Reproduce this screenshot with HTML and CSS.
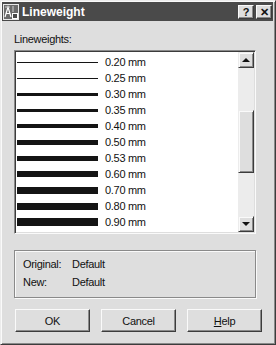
FILE: index.html
```html
<html>
<head>
    <title>Lineweight</title>
    <link rel="stylesheet" href="styles.css">
</head>
<body>
    <div class="window">
        <!-- Title bar -->
        <div class="titlebar">
            <svg class="appicon" width="16" height="16" viewBox="0 0 16 16">
                <rect x="0" y="0" width="16" height="16" fill="#6a6a6a"/>
                <rect x="0.5" y="0.5" width="15" height="15" fill="none" stroke="#e8e8e8"/>
                <path d="M2 13 L5 3 L8 13 M3.2 9.5 H6.8" stroke="#fff" stroke-width="1.2" fill="none"/>
                <path d="M2 3 H7 M10 2 V8" stroke="#cfcfcf" stroke-width="1" fill="none"/>
                <rect x="9.5" y="9.5" width="5" height="5" fill="#4a4a4a" stroke="#fff"/>
            </svg>
            <span class="title">Lineweight</span>
            <div class="tbuttons">
                <div class="tbtn">?</div>
                <div class="tbtn">&#x2715;</div>
            </div>
        </div>

        <div class="content">
            <div class="label">Lineweights:</div>

            <!-- Lineweight list -->
            <div class="listbox">
                <div class="rows">
                    <div class="row"><div class="line" style="height:1px"></div><span class="val">0.20 mm</span></div>
                    <div class="row"><div class="line" style="height:1px"></div><span class="val">0.25 mm</span></div>
                    <div class="row"><div class="line" style="height:3px"></div><span class="val">0.30 mm</span></div>
                    <div class="row"><div class="line" style="height:3px"></div><span class="val">0.35 mm</span></div>
                    <div class="row"><div class="line" style="height:4px"></div><span class="val">0.40 mm</span></div>
                    <div class="row"><div class="line" style="height:5px"></div><span class="val">0.50 mm</span></div>
                    <div class="row"><div class="line" style="height:5px"></div><span class="val">0.53 mm</span></div>
                    <div class="row"><div class="line" style="height:6px"></div><span class="val">0.60 mm</span></div>
                    <div class="row"><div class="line" style="height:7px"></div><span class="val">0.70 mm</span></div>
                    <div class="row"><div class="line" style="height:7px"></div><span class="val">0.80 mm</span></div>
                    <div class="row"><div class="line" style="height:8px"></div><span class="val">0.90 mm</span></div>
                </div>
                <div class="scrollbar">
                    <div class="sbtn"><div class="arrow-up"></div></div>
                    <div class="track">
                        <div class="thumb"></div>
                    </div>
                    <div class="sbtn"><div class="arrow-down"></div></div>
                </div>
            </div>

            <!-- Original / New -->
            <div class="info">
                <div class="inforow"><span class="key">Original:</span><span>Default</span></div>
                <div class="inforow"><span class="key">New:</span><span>Default</span></div>
            </div>

            <div class="buttons">
                <button class="btn">OK</button>
                <button class="btn">Cancel</button>
                <button class="btn"><u>H</u>elp</button>
            </div>
        </div>
    </div>
</body>
</html>
```

FILE: styles.css
```css
body {
    margin: 0;
    background-color: #dedede;
    font-family: "Liberation Sans", Arial, sans-serif;
    font-size: 11px;
    color: #111;
}

.window {
    width: 276px;
    height: 345px;
    box-sizing: border-box;
    background-color: #dedede;
    border-top: 1px solid #ececec;
    border-left: 1px solid #ececec;
    border-right: 1px solid #3c3c3c;
    border-bottom: 1px solid #3c3c3c;
    box-shadow: inset 1px 1px 0 #fafafa, inset -1px -1px 0 #8a8a8a;
    padding: 1px 2px 2px 1px;
    display: flex;
    flex-direction: column;
}

.titlebar {
    height: 19px;
    background-color: #4a4a4a;
    display: flex;
    align-items: center;
    padding-left: 1px;
}

.appicon {
    display: block;
    flex-shrink: 0;
}

.title {
    color: white;
    font-weight: bold;
    font-size: 12px;
    margin-left: 3px;
    flex: 1;
}

.tbuttons {
    display: flex;
    gap: 2px;
    margin-right: 1px;
}

.tbtn {
    width: 16px;
    height: 14px;
    box-sizing: border-box;
    background-color: #dedede;
    border-top: 1px solid #fafafa;
    border-left: 1px solid #fafafa;
    border-right: 1px solid #3c3c3c;
    border-bottom: 1px solid #3c3c3c;
    box-shadow: inset -1px -1px 0 #8a8a8a;
    color: #111;
    font-weight: bold;
    font-size: 11px;
    line-height: 12px;
    text-align: center;
}

.content {
    padding: 0 0 0 12px;
    display: flex;
    flex-direction: column;
}

.label {
    margin-top: 12px;
    line-height: 13px;
    letter-spacing: -0.3px;
}

.listbox {
    margin-top: 4px;
    width: 242px;
    height: 184px;
    box-sizing: border-box;
    border-top: 1px solid #8a8a8a;
    border-left: 1px solid #8a8a8a;
    border-right: 1px solid #fafafa;
    border-bottom: 1px solid #fafafa;
    box-shadow: inset 1px 1px 0 #3c3c3c, inset -1px -1px 0 #dedede;
    padding: 1px;
    background-color: white;
    display: flex;
}

.rows {
    flex: 1;
    padding-top: 2px;
}

.row {
    height: 16px;
    display: flex;
    align-items: center;
}

.line {
    width: 81px;
    margin-left: 1px;
    background-color: #141414;
}

.val {
    margin-left: 7px;
    letter-spacing: -0.3px;
}

.scrollbar {
    width: 16px;
    display: flex;
    flex-direction: column;
    background-color: #ececec;
}

.sbtn {
    height: 16px;
    box-sizing: border-box;
    background-color: #dedede;
    border-top: 1px solid #ececec;
    border-left: 1px solid #ececec;
    border-right: 1px solid #3c3c3c;
    border-bottom: 1px solid #3c3c3c;
    box-shadow: inset 1px 1px 0 #fafafa, inset -1px -1px 0 #8a8a8a;
    display: flex;
    align-items: center;
    justify-content: center;
}

.arrow-up {
    width: 0;
    height: 0;
    border-left: 4px solid transparent;
    border-right: 4px solid transparent;
    border-bottom: 4px solid #111;
}

.arrow-down {
    width: 0;
    height: 0;
    border-left: 4px solid transparent;
    border-right: 4px solid transparent;
    border-top: 4px solid #111;
}

.track {
    flex: 1;
    padding-top: 42px;
}

.thumb {
    height: 63px;
    box-sizing: border-box;
    background-color: #dedede;
    border-top: 1px solid #ececec;
    border-left: 1px solid #ececec;
    border-right: 1px solid #3c3c3c;
    border-bottom: 1px solid #3c3c3c;
    box-shadow: inset 1px 1px 0 #fafafa, inset -1px -1px 0 #8a8a8a;
}

.info {
    margin-top: 16px;
    width: 242px;
    height: 48px;
    box-sizing: border-box;
    border: 1px solid #8a8a8a;
    box-shadow: inset 1px 1px 0 #fafafa, 1px 1px 0 #fafafa;
    padding: 6px 0 0 8px;
}

.inforow {
    height: 18px;
    line-height: 14px;
    display: flex;
    letter-spacing: -0.3px;
}

.key {
    width: 49px;
}

.buttons {
    margin-top: 11px;
    display: flex;
    gap: 11px;
    padding-left: 1px;
}

.btn {
    width: 75px;
    height: 23px;
    box-sizing: border-box;
    background-color: #dedede;
    border-top: 1px solid #fafafa;
    border-left: 1px solid #fafafa;
    border-right: 1px solid #3c3c3c;
    border-bottom: 1px solid #3c3c3c;
    box-shadow: inset -1px -1px 0 #8a8a8a;
    font-family: "Liberation Sans", Arial, sans-serif;
    font-size: 11px;
    color: #111;
    letter-spacing: -0.3px;
    padding: 0;
}
```
